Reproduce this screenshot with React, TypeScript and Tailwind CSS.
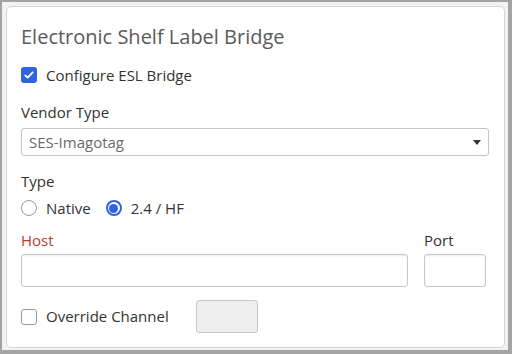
import React, { useState } from 'react';

const font = { fontFamily: '"Open Sans", "Noto Sans", sans-serif' };

const CheckIcon = () => (
  <svg viewBox="0 0 16 16" className="w-[12px] h-[12px]" fill="none">
    <path d="M3 8.5l3.2 3L13 4.5" stroke="white" strokeWidth="2.4" strokeLinecap="round" strokeLinejoin="round" />
  </svg>
);

const Checkbox: React.FC<{ checked: boolean; onChange: () => void }> = ({ checked, onChange }) => (
  <button
    onClick={onChange}
    className={`w-[16px] h-[16px] rounded-[3px] flex items-center justify-center shrink-0 ${
      checked ? 'bg-[#2f63e0]' : 'bg-white border border-[#9a9a9a]'
    }`}
  >
    {checked && <CheckIcon />}
  </button>
);

const Radio: React.FC<{ checked: boolean; onChange: () => void }> = ({ checked, onChange }) => (
  <button
    onClick={onChange}
    className={`w-[16px] h-[16px] rounded-full flex items-center justify-center shrink-0 border ${
      checked ? 'border-[#2f63e0] border-2' : 'border-[#9a9a9a]'
    }`}
  >
    {checked && <span className="w-[9px] h-[9px] rounded-full bg-[#2f63e0]" />}
  </button>
);

export default function App() {
  const [configure, setConfigure] = useState(true);
  const [type, setType] = useState<'native' | 'hf'>('hf');
  const [override, setOverride] = useState(false);

  return (
    <div
      className="w-[512px] h-[354px] border-l-2 border-t-2 border-r-4 border-b-4 border-[#a4a4a4] bg-[#f3f3f3] pl-[4px] pt-[4px] pr-[3px] pb-[2px]"
      style={font}
    >
      <div className="h-full border border-[#d6d6d6] rounded-[5px] bg-white pl-[14px] pr-[15px] pt-[16px] text-[#333] text-[15px]">
        <h1 className="h-[28px] leading-[28px] text-[20px] text-[#5a5a5a]">Electronic Shelf Label Bridge</h1>

        <label className="mt-[14px] h-[20px] flex items-center gap-[9px]">
          <Checkbox checked={configure} onChange={() => setConfigure(!configure)} />
          <span>Configure ESL Bridge</span>
        </label>

        <div className="mt-[17px] h-[20px] leading-[20px]">Vendor Type</div>
        <div className="mt-[6px] h-[28px] border border-[#c4c4c4] rounded-[3px] flex items-center justify-between pl-[7px] pr-[7px] text-[#6a6a6a]">
          <span>SES-Imagotag</span>
          <svg viewBox="0 0 8 5" className="w-[8px] h-[5px]">
            <path d="M0 0h8L4 5z" fill="#333" />
          </svg>
        </div>

        <div className="mt-[15px] h-[20px] leading-[20px]">Type</div>
        <div className="mt-[7px] h-[20px] flex items-center">
          <label className="flex items-center gap-[9px]">
            <Radio checked={type === 'native'} onChange={() => setType('native')} />
            <span>Native</span>
          </label>
          <label className="flex items-center gap-[9px] ml-[15px]">
            <Radio checked={type === 'hf'} onChange={() => setType('hf')} />
            <span>2.4 / HF</span>
          </label>
        </div>

        <div className="mt-[12px] flex gap-[16px]">
          <div className="flex-1">
            <div className="h-[20px] leading-[20px] text-[#c0392b]">Host</div>
            <input className="mt-[4px] w-full h-[33px] border border-[#c8c8c8] rounded-[3px] shadow-[inset_0_1px_2px_rgba(0,0,0,0.08)] outline-none px-2" />
          </div>
          <div className="w-[62px] mr-[3px]">
            <div className="h-[20px] leading-[20px]">Port</div>
            <input className="mt-[4px] w-full h-[33px] border border-[#c8c8c8] rounded-[3px] shadow-[inset_0_1px_2px_rgba(0,0,0,0.08)] outline-none px-2" />
          </div>
        </div>

        <div className="mt-[13px] h-[33px] flex items-center">
          <label className="flex items-center gap-[9px] w-[175px]">
            <Checkbox checked={override} onChange={() => setOverride(!override)} />
            <span>Override Channel</span>
          </label>
          <input
            disabled
            className="w-[62px] h-[33px] border border-[#c8c8c8] rounded-[3px] bg-[#eeeeee]"
          />
        </div>
      </div>
    </div>
  );
}
